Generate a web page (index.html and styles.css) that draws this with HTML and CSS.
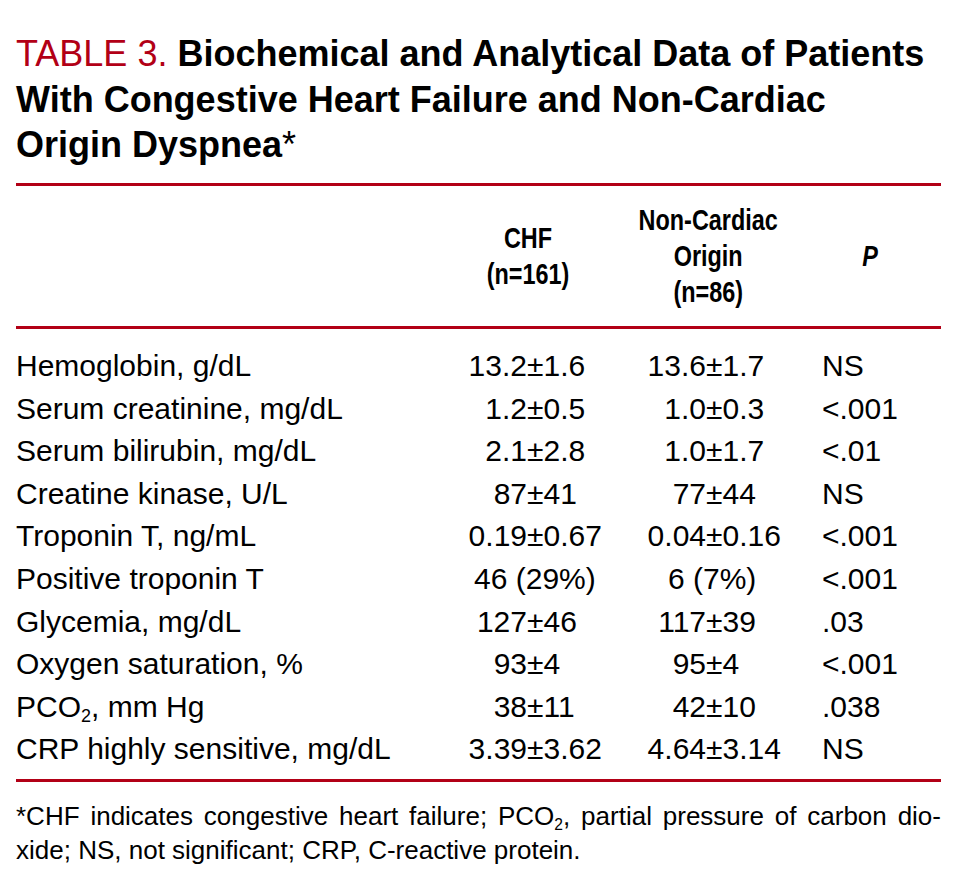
FILE: index.html
```html
<!DOCTYPE html>
<html lang="en">
<head>
<meta charset="utf-8">
<title>Table 3</title>
<link rel="stylesheet" href="styles.css">
</head>
<body>
<div class="page">
  <h1 class="title"><span class="label">TABLE 3.</span> <span class="bold">Biochemical and Analytical Data of Patients<br>With Congestive Heart Failure and Non-Cardiac<br>Origin Dyspnea</span><span class="ast">*</span></h1>
  <table class="data">
    <colgroup>
      <col class="c-label"><col class="c-chf"><col class="c-nc"><col class="c-p">
    </colgroup>
    <thead>
      <tr>
        <th></th>
        <th><span class="hd">CHF<br>(n=161)</span></th>
        <th><span class="hd">Non-Cardiac<br>Origin<br>(n=86)</span></th>
        <th class="ph"><span class="hd"><i>P</i></span></th>
      </tr>
    </thead>
    <tbody>
      <tr class="first"><td>Hemoglobin, g/dL</td><td class="chf"><span class="a">13.2</span>±1.6</td><td class="nc"><span class="a">13.6</span>±1.7</td><td class="p">NS</td></tr>
      <tr><td>Serum creatinine, mg/dL</td><td class="chf"><span class="a">1.2</span>±0.5</td><td class="nc"><span class="a">1.0</span>±0.3</td><td class="p">&lt;.001</td></tr>
      <tr><td>Serum bilirubin, mg/dL</td><td class="chf"><span class="a">2.1</span>±2.8</td><td class="nc"><span class="a">1.0</span>±1.7</td><td class="p">&lt;.01</td></tr>
      <tr><td>Creatine kinase, U/L</td><td class="chf"><span class="a">87</span>±41</td><td class="nc"><span class="a">77</span>±44</td><td class="p">NS</td></tr>
      <tr><td>Troponin T, ng/mL</td><td class="chf"><span class="a">0.19</span>±0.67</td><td class="nc"><span class="a">0.04</span>±0.16</td><td class="p">&lt;.001</td></tr>
      <tr><td>Positive troponin T</td><td class="chf-pct">46 (29%)</td><td class="nc-pct">6 (7%)</td><td class="p">&lt;.001</td></tr>
      <tr><td>Glycemia, mg/dL</td><td class="chf"><span class="a">127</span>±46</td><td class="nc"><span class="a">117</span>±39</td><td class="p">.03</td></tr>
      <tr><td>Oxygen saturation, %</td><td class="chf"><span class="a">93</span>±4</td><td class="nc"><span class="a">95</span>±4</td><td class="p">&lt;.001</td></tr>
      <tr><td>PCO<sub>2</sub>, mm Hg</td><td class="chf"><span class="a">38</span>±11</td><td class="nc"><span class="a">42</span>±10</td><td class="p">.038</td></tr>
      <tr class="last"><td>CRP highly sensitive, mg/dL</td><td class="chf"><span class="a">3.39</span>±3.62</td><td class="nc"><span class="a">4.64</span>±3.14</td><td class="p">NS</td></tr>
    </tbody>
  </table>
  <p class="note"><span class="note-line">*CHF indicates congestive heart failure; PCO<sub>2</sub>, partial pressure of carbon dio-</span><span class="note-last">xide; NS, not significant; CRP, C-reactive protein.</span></p>
</div>
</body>
</html>
```

FILE: styles.css
```css
html, body {
  margin: 0;
  padding: 0;
  background: #ffffff;
}

.page {
  width: 925px;
  padding: 31px 37px 0 16px;
  color: #000000;
  font-family: "Liberation Sans", Arial, sans-serif;
}

.title {
  margin: 0;
  font-size: 36px;
  line-height: 45.5px;
  font-weight: 400;
}

.label {
  color: #b20016;
}

.bold {
  font-weight: 700;
}

.ast {
  font-weight: 400;
}

.data {
  margin-top: 15.5px;
  width: 925px;
  table-layout: fixed;
  border-collapse: collapse;
  border-top: 3px solid #b20016;
  border-bottom: 3px solid #b20016;
}

.c-label { width: 424px; }
.c-chf { width: 176px; }
.c-nc { width: 184px; }
.c-p { width: 141px; }

.data th {
  height: 140px;
  padding: 0;
  vertical-align: middle;
  text-align: center;
  font-family: "Liberation Sans", Arial, sans-serif;
  font-weight: 700;
  font-size: 30px;
  line-height: 36px;
  border-bottom: 3px solid #b20016;
}

.hd {
  display: inline-block;
  transform: scaleX(0.78);
  transform-origin: center;
}

.data td {
  height: 42.6px;
  padding: 0;
  font-size: 30px;
  line-height: 42.6px;
  vertical-align: top;
  white-space: nowrap;
}

.data tr.first td {
  padding-top: 16px;
}

.data tr.last td {
  padding-bottom: 8px;
}

.chf .a {
  display: inline-block;
  width: 87px;
  text-align: right;
}

.nc .a {
  display: inline-block;
  width: 90px;
  text-align: right;
}

.data td.chf-pct {
  padding-left: 34px;
}

.data td.nc-pct {
  padding-left: 52px;
}

.data td.p {
  padding-left: 22px;
}

sub {
  font-size: 0.6em;
  line-height: 0;
  vertical-align: -0.3em;
}

.note {
  margin: 17px 0 0 0;
  font-size: 26px;
  line-height: 34px;
}

.note-line {
  display: block;
  text-align: justify;
  text-align-last: justify;
}

.note-last {
  display: block;
}
```
